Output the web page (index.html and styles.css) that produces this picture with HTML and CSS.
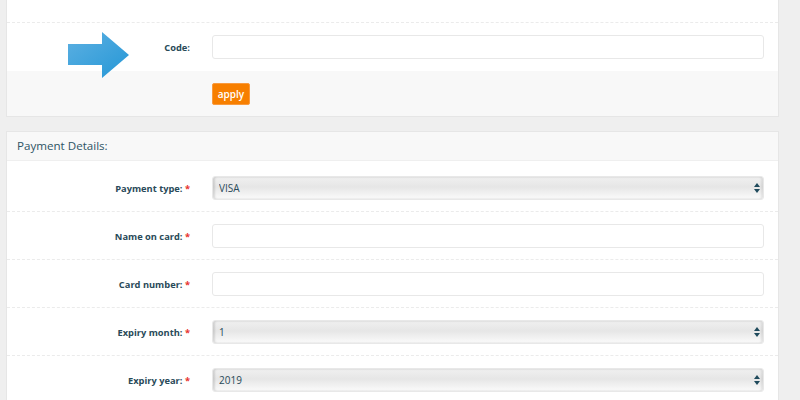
FILE: index.html
```html
<!DOCTYPE html>
<html>
<head>
    <title>Checkout</title>
    <link rel="stylesheet" href="styles.css">
</head>
<body>
    <div class="panel">
        <div class="row row-top"></div>
        <div class="row code-row">
            <svg class="arrow" width="62" height="46" viewBox="0 0 62 46">
                <defs>
                    <linearGradient id="arrowFill" x1="0" y1="0" x2="1" y2="1">
                        <stop offset="0" stop-color="#5db0e2"/>
                        <stop offset="1" stop-color="#2597d6"/>
                    </linearGradient>
                </defs>
                <polygon points="0,12 34,12 34,0 61,23 34,46 34,33 0,33" fill="url(#arrowFill)"/>
            </svg>
            <label for="code">Code:</label>
            <input type="text" id="code">
        </div>
        <div class="panel-footer">
            <button class="btn-apply">apply</button>
        </div>
    </div>

    <div class="panel">
        <div class="panel-heading">Payment Details:</div>
        <div class="row first">
            <label for="ptype">Payment type: <span class="req">*</span></label>
            <div class="select-wrap">
                <select id="ptype">
                    <option>VISA</option>
                    <option>MasterCard</option>
                </select>
                <svg class="updown" width="6" height="10" viewBox="0 0 6 10"><polygon points="3,0 6,4 0,4" /><polygon points="0,6 6,6 3,10" /></svg>
            </div>
        </div>
        <div class="row">
            <label for="cname">Name on card: <span class="req">*</span></label>
            <input type="text" id="cname">
        </div>
        <div class="row">
            <label for="cnum">Card number: <span class="req">*</span></label>
            <input type="text" id="cnum">
        </div>
        <div class="row">
            <label for="emonth">Expiry month: <span class="req">*</span></label>
            <div class="select-wrap">
                <select id="emonth">
                    <option>1</option>
                    <option>2</option>
                    <option>3</option>
                </select>
                <svg class="updown" width="6" height="10" viewBox="0 0 6 10"><polygon points="3,0 6,4 0,4" /><polygon points="0,6 6,6 3,10" /></svg>
            </div>
        </div>
        <div class="row">
            <label for="eyear">Expiry year: <span class="req">*</span></label>
            <div class="select-wrap">
                <select id="eyear">
                    <option>2019</option>
                    <option>2020</option>
                </select>
                <svg class="updown" width="6" height="10" viewBox="0 0 6 10"><polygon points="3,0 6,4 0,4" /><polygon points="0,6 6,6 3,10" /></svg>
            </div>
        </div>
    </div>
</body>
</html>
```

FILE: styles.css
```css
body {
    font-family: "Open Sans", Arial, sans-serif;
    margin: 0;
    background-color: #efefef;
    color: #294a59;
}

.panel {
    margin: 0 21px 14px 6px;
    background-color: #fff;
    border: 1px solid #e6e6e6;
    border-top: none;
}

.panel + .panel {
    border-top: 1px solid #e6e6e6;
}

.row {
    position: relative;
    display: grid;
    grid-template-columns: 183px 1fr;
    column-gap: 22px;
    align-items: center;
    padding: 12px 14px 11px 0;
    border-bottom: 1px dashed #ebebeb;
}

.row:last-child {
    border-bottom: none;
}

.row-top {
    display: block;
    height: 22px;
    padding: 0;
}

.row.first {
    padding-top: 15px;
}

.code-row {
    padding-bottom: 12px;
    border-bottom: none;
}

.row label {
    text-align: right;
    font-size: 9.3px;
    font-weight: bold;
}

.req {
    color: #e8322f;
}

.row input,
.row select {
    box-sizing: border-box;
    display: block;
    width: 100%;
    height: 24px;
    border: 1px solid #e8e8e8;
    border-radius: 3px;
    font-family: "Open Sans", Arial, sans-serif;
    font-size: 10px;
    color: #294a59;
    padding: 0 6px;
    outline: none;
    margin: 0;
}

.row input {
    background: #fff;
}

.select-wrap {
    position: relative;
}

.row select {
    -webkit-appearance: none;
    appearance: none;
    background: linear-gradient(#f0f0f0, #e6e6e6 45%, #f5f5f5 85%, #fcfcfc);
    box-shadow: inset 2px 0 2px rgba(0, 0, 0, 0.12), inset -2px 0 2px rgba(0, 0, 0, 0.08);
}

.updown {
    position: absolute;
    right: 4px;
    top: 7px;
    fill: #1f4a5c;
}

.arrow {
    position: absolute;
    left: 61px;
    top: 9px;
}

.panel-footer {
    display: flex;
    background-color: #f8f8f8;
    padding: 12px 0 11px 205px;
}

.btn-apply {
    display: block;
    background-color: #f77f00;
    color: #fff;
    border: 1px solid #f99a3e;
    border-radius: 2px;
    font-family: "Open Sans", Arial, sans-serif;
    font-size: 10px;
    font-weight: 600;
    width: 38px;
    height: 22px;
    padding: 0;
    cursor: pointer;
}

.panel-heading {
    background-color: #f8f8f8;
    border-bottom: 1px solid #efefef;
    height: 28px;
    line-height: 28px;
    padding-left: 10px;
    font-size: 11.6px;
    color: #2f5565;
}
```
